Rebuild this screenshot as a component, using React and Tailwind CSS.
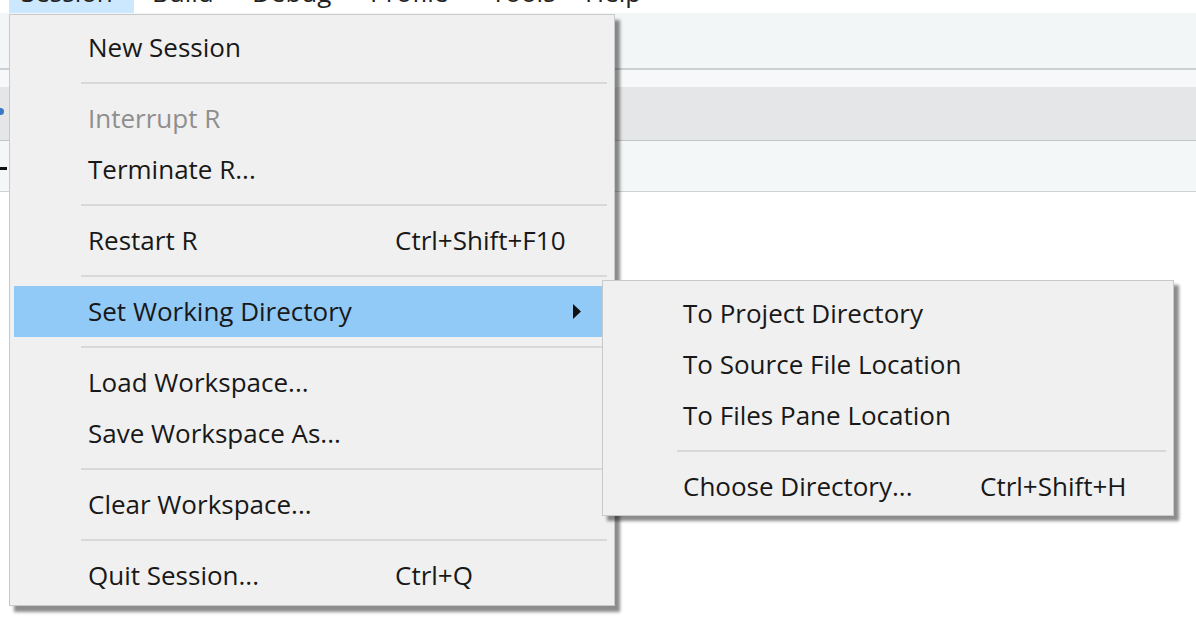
import React from "react";

const font = { fontFamily: '"Open Sans", "Noto Sans", sans-serif' };

function Row({ label, shortcut, disabled, active, arrow, labelW }) {
  return (
    <div
      className={`flex h-[51px] items-center ${active ? "bg-[#91c9f7]" : ""}`}
    >
      <div
        className={`mb-[2px] flex items-center pl-[74px] text-[26px] leading-none ${
          disabled ? "text-[#8e8e8e]" : "text-[#181818]"
        }`}
        style={{ width: labelW }}
      >
        {label}
      </div>
      {shortcut && (
        <div className="mb-[2px] text-[26px] leading-none text-[#181818]">{shortcut}</div>
      )}
      {arrow && (
        <div className="ml-auto mr-[29px] flex items-center">
          <svg width="9" height="15" viewBox="0 0 9 15">
            <polygon points="1,0 9,7.5 1,15" fill="#111" />
          </svg>
        </div>
      )}
    </div>
  );
}

function Sep({ ml }) {
  return (
    <div className="flex h-[20px] items-center">
      <div className="h-[2px] w-full bg-[#d8d8d8]" style={{ marginLeft: ml, marginRight: 3 }} />
    </div>
  );
}

export default function App() {
  const menuItems = ["Session", "Build", "Debug", "Profile", "Tools", "Help"];
  const gaps = ["w-[125px]", "w-[118px]", "w-[118px]", "w-[121px]", "w-[94px]", "w-[80px]"];
  return (
    <div className="relative h-[628px] w-[1196px] overflow-hidden bg-white" style={font}>
      {/* menubar */}
      <div className="flex h-[13px] overflow-hidden bg-white pl-[9px]">
        {menuItems.map((m, i) => (
          <div
            key={m}
            className={`flex h-[13px] items-end ${gaps[i]} ${
              i === 0 ? "bg-[#cce8ff] pl-[12px]" : i === 1 ? "pl-[18px]" : "pl-0"
            }`}
          >
            <span className="mb-[4px] block text-[26px] leading-[34px] text-[#222]">{m}</span>
          </div>
        ))}
      </div>
      {/* toolbars */}
      <div className="h-[55px] bg-[#f3f6f7]" />
      <div className="h-[2px] bg-[#cdd0d2]" />
      <div className="h-[17px] bg-[#f6f8f9]" />
      <div className="flex h-[53px] items-center bg-[#e5e6e8]">
        <div className="mt-[-4px] h-[7px] w-[4px] rounded-r-full bg-[#3b78c4]" />
      </div>
      <div className="h-[1px] bg-[#c3c4c6]" />
      <div className="flex h-[50px] items-center bg-[#f4f7f8]">
        <div className="mt-[4px] h-[3px] w-[7px] bg-[#111]" />
      </div>
      <div className="h-[1px] bg-[#cfd1d2]" />
      <div className="h-[436px] bg-white" />

      {/* main menu */}
      <div className="absolute left-[9px] top-[14px] w-[606px] border border-[#c9c9c9] bg-[#f0f0f0] px-[4px] pb-[4px] pt-[7px] shadow-[5px_6px_3px_rgba(0,0,0,0.45)]">
        <Row label="New Session" labelW={381} />
        <Sep ml={67} />
        <Row label="Interrupt R" disabled labelW={381} />
        <Row label="Terminate R..." labelW={381} />
        <Sep ml={67} />
        <Row label="Restart R" shortcut="Ctrl+Shift+F10" labelW={381} />
        <Sep ml={67} />
        <Row label="Set Working Directory" active arrow labelW={381} />
        <Sep ml={67} />
        <Row label="Load Workspace..." labelW={381} />
        <Row label="Save Workspace As..." labelW={381} />
        <Sep ml={67} />
        <Row label="Clear Workspace..." labelW={381} />
        <Sep ml={67} />
        <Row label="Quit Session..." shortcut="Ctrl+Q" labelW={381} />
      </div>

      {/* submenu */}
      <div className="absolute left-[602px] top-[280px] w-[572px] border border-[#c9c9c9] bg-[#f0f0f0] px-[4px] pb-[3px] pt-[7px] shadow-[5px_5px_3px_rgba(0,0,0,0.45)]">
        <div className="pl-[2px]">
          <Row label="To Project Directory" labelW={371} />
          <Row label="To Source File Location" labelW={371} />
          <Row label="To Files Pane Location" labelW={371} />
          <Sep ml={68} />
          <Row label="Choose Directory..." shortcut="Ctrl+Shift+H" labelW={371} />
        </div>
      </div>
    </div>
  );
}
